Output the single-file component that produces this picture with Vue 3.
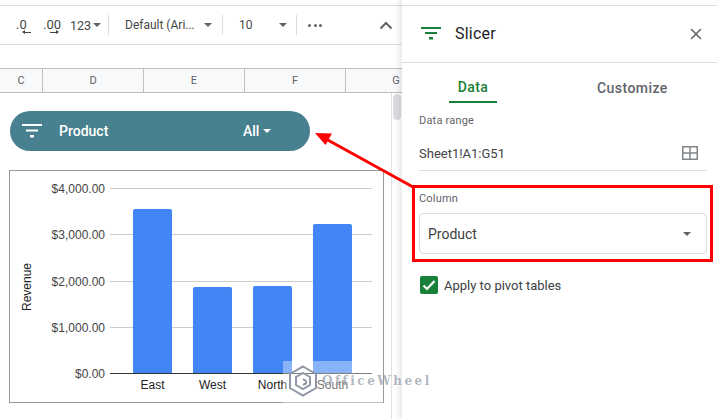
<script setup>
const columns = [
  { name: "C", width: 43 },
  { name: "D", width: 101 },
  { name: "E", width: 101 },
  { name: "F", width: 101 },
  { name: "G", width: 101 },
];

const gridLines = [
  { y: 17.5, label: "$4,000.00" },
  { y: 63.5, label: "$3,000.00" },
  { y: 110.5, label: "$2,000.00" },
  { y: 156.5, label: "$1,000.00" },
  { y: 202.5, label: "$0.00" },
];

const bars = [
  { name: "East", x: 123, top: 38 },
  { name: "West", x: 183, top: 116 },
  { name: "North", x: 243, top: 115 },
  { name: "South", x: 303, top: 53 },
];
</script>

<template>
  <div class="page">
    <main class="sheet">
      <div class="toolbar">
        <span class="tool dec one">.0<i class="arrow left"></i></span>
        <span class="tool dec two">.00<i class="arrow right"></i></span>
        <span class="tool num">123<i class="caret"></i></span>
        <span class="divider first"></span>
        <span class="tool font">Default (Ari...<i class="caret"></i></span>
        <span class="divider"></span>
        <span class="tool size">10<i class="caret"></i></span>
        <span class="divider"></span>
        <span class="dots"><b></b><b></b><b></b></span>
        <svg class="chevron" width="14" height="9" viewBox="0 0 14 9">
          <path d="M1.5 7.5 7 2l5.5 5.5" fill="none" stroke="#5f6368" stroke-width="2" />
        </svg>
      </div>
      <div class="formula"></div>
      <div class="col-headers">
        <div
          v-for="col in columns"
          :key="col.name"
          class="col"
          :style="{ width: col.width + 'px' }"
        >
          {{ col.name }}
        </div>
      </div>
      <div class="grid">
        <div class="canvas">
          <div class="slicer-pill">
            <svg width="20" height="14" viewBox="0 0 20 14">
              <path d="M0 0h20v2H0zM4 5.5h12v2H4zM8 11h4v2.500H8z" fill="#fff" />
            </svg>
            <span class="pill-name">Product</span>
            <span class="pill-value">All<i class="caret white"></i></span>
          </div>
          <div class="chart">
            <svg width="373" height="231" viewBox="0 0 373 231">
              <text class="axis-title" transform="translate(21 116) rotate(-90)" text-anchor="middle">Revenue</text>
              <g v-for="line in gridLines" :key="line.y">
                <line
                  x1="100"
                  x2="362"
                  :y1="line.y"
                  :y2="line.y"
                  :stroke="line.y > 200 ? '#333' : '#ccc'"
                />
                <text class="tick" x="95" :y="line.y + 4" text-anchor="end">{{ line.label }}</text>
              </g>
              <g v-for="bar in bars" :key="bar.name">
                <path
                  :d="`M${bar.x} 202V${bar.top + 2}q0-2 2-2h35q2 0 2 2V202z`"
                  fill="#4285f4"
                />
                <text class="tick dark" :x="bar.x + 19.500" y="218" text-anchor="middle">{{ bar.name }}</text>
              </g>
            </svg>
          </div>
        </div>
        <div class="scroll-gutter"><div class="scroll-thumb"></div></div>
      </div>
    </main>

    <aside class="panel">
      <header class="panel-head">
        <svg width="20" height="13" viewBox="0 0 20 13">
          <path d="M0 0h20v2H0zM4 5h12v2H4zM8 10h4v2.500H8z" fill="#188038" />
        </svg>
        <h1>Slicer</h1>
        <svg class="close" width="12" height="12" viewBox="0 0 12 12">
          <path d="M1 1l10 10M11 1 1 11" stroke="#5f6368" stroke-width="1.500" fill="none" />
        </svg>
      </header>
      <nav class="tabs">
        <span class="tab active">Data</span>
        <span class="tab">Customize</span>
      </nav>
      <div class="panel-body">
        <label class="field-label">Data range</label>
        <div class="range-row">
          <span>Sheet1!A1:G51</span>
          <svg width="16" height="14" viewBox="0 0 16 14">
            <path d="M.75.75h14.500v12.500H.75zM8 .75v12.500M.75 7h14.500" fill="none" stroke="#80868b" stroke-width="1.500" />
          </svg>
        </div>
        <div class="highlight">
          <label class="field-label">Column</label>
          <div class="select">
            <span>Product</span>
            <i class="caret"></i>
          </div>
        </div>
        <div class="check-row">
          <span class="checkbox">
            <svg width="14" height="12" viewBox="0 0 14 12">
              <path d="M1.500 6.500 5 10l7.500-8" fill="none" stroke="#fff" stroke-width="2.200" />
            </svg>
          </span>
          <span>Apply to pivot tables</span>
        </div>
      </div>
    </aside>

    <svg class="callout" width="717" height="419" viewBox="0 0 717 419">
      <path d="M413 187 326 139" stroke="#f00" stroke-width="3" fill="none" />
      <path d="M315 133 332 133.500 325.500 145z" fill="#f00" />
    </svg>

    <div class="watermark">
      <svg width="30" height="32" viewBox="0 0 30 32">
        <path
          d="M15 1.500 28 9V23L15 30.500 2 23V9zM15 8 22 12V20L15 24 8 20V12zM15 14 18 16V18.500L15 20"
          fill="none"
          stroke="#8f97a6"
          stroke-width="2"
        />
      </svg>
      <span>OfficeWheel</span>
    </div>
  </div>
</template>

<style scoped>
.page {
  position: relative;
  display: flex;
  width: 717px;
  height: 419px;
  overflow: hidden;
  background: #fff;
  font-family: Roboto, "Liberation Sans", sans-serif;
  color: #3c4043;
}

.sheet {
  width: 402px;
  flex: none;
  padding-top: 5px;
  box-sizing: border-box;
}

.toolbar {
  display: flex;
  align-items: center;
  height: 40px;
  box-sizing: border-box;
  border-top: 1px solid #dadce0;
  border-bottom: 1px solid #dadce0;
  font-size: 12px;
}

.tool {
  position: relative;
  display: flex;
  align-items: center;
  color: #444746;
}

.dec {
  font-size: 13px;
  margin-top: -2px;
}

.one {
  margin-left: 16px;
  width: 27px;
}

.two {
  width: 27px;
}

.arrow {
  position: absolute;
  top: 15px;
  width: 7px;
  height: 1.500px;
  background: #444;
}

.arrow::after {
  content: "";
  position: absolute;
  top: -2px;
  border-top: 2.500px solid transparent;
  border-bottom: 2.500px solid transparent;
}

.arrow.left {
  left: 8px;
}

.arrow.left::after {
  left: -2px;
  border-right: 3px solid #444;
}

.arrow.right {
  left: 7px;
}

.arrow.right::after {
  right: -2px;
  border-left: 3px solid #444;
}

.num {
  width: 38px;
  font-size: 12.500px;
}

.num .caret {
  margin-left: 2px;
}

.caret {
  display: inline-block;
  width: 0;
  height: 0;
  border-left: 4px solid transparent;
  border-right: 4px solid transparent;
  border-top: 4px solid #5f6368;
}

.caret.white {
  border-top-color: #fff;
  margin-left: 4px;
}

.divider {
  width: 1px;
  height: 20px;
  background: #dadce0;
}

.divider.first {
  margin-right: 16px;
}

.font {
  width: 97px;
  font-size: 12px;
  justify-content: space-between;
  padding-right: 10px;
  box-sizing: border-box;
}

.size {
  width: 73px;
  padding: 0 9px 0 16px;
  box-sizing: border-box;
  justify-content: space-between;
}

.dots {
  display: flex;
  gap: 2.500px;
  margin-left: 11px;
}

.dots b {
  width: 3px;
  height: 3px;
  border-radius: 50%;
  background: #5f6368;
}

.chevron {
  margin-left: 57px;
}

.formula {
  height: 23px;
}

.col-headers {
  display: flex;
  height: 25px;
  box-sizing: border-box;
  overflow: hidden;
  background: #f8f9fa;
  border-top: 1px solid #c0c0c0;
  border-bottom: 1px solid #c0c0c0;
}

.col {
  flex: none;
  box-sizing: border-box;
  border-right: 1px solid #c0c0c0;
  text-align: center;
  font-size: 11px;
  line-height: 23px;
  color: #5f6368;
}

.grid {
  display: flex;
  height: 326px;
}

.canvas {
  width: 391px;
  flex: none;
  padding: 18px 0 0 10px;
  box-sizing: border-box;
}

.slicer-pill {
  display: flex;
  align-items: center;
  width: 300px;
  height: 40px;
  padding-left: 12px;
  box-sizing: border-box;
  border-radius: 20px;
  background: #47808e;
  color: #fff;
  font-size: 14px;
  font-weight: 500;
}

.pill-name {
  margin-left: 17px;
  width: 184px;
}

.pill-value {
  display: flex;
  align-items: center;
}

.chart {
  width: 375px;
  height: 233px;
  margin: 19px 0 0 -1px;
  box-sizing: border-box;
  border: 1px solid #999;
}

.chart svg {
  display: block;
}

.tick {
  font-family: "Liberation Sans", Arial, sans-serif;
  font-size: 12px;
  fill: #444;
}

.tick.dark {
  fill: #222;
}

.axis-title {
  font-family: "Liberation Sans", Arial, sans-serif;
  font-size: 12px;
  fill: #222;
}

.scroll-gutter {
  width: 11px;
  border-left: 1px solid #e0e0e0;
  box-sizing: border-box;
  padding: 1px;
}

.scroll-thumb {
  width: 8px;
  height: 26px;
  border-radius: 4px;
  background: #dadce0;
}

.panel {
  flex: 1;
  padding-top: 5px;
  box-sizing: border-box;
  background: #fff;
  box-shadow: -3px 0 5px rgba(60, 64, 67, 0.12);
  z-index: 1;
}

.panel-head {
  display: flex;
  align-items: center;
  height: 58px;
  padding: 0 15px 1px 19px;
  box-sizing: border-box;
  border-top: 1px solid #dadce0;
  border-bottom: 1px solid #dadce0;
}

.panel-head h1 {
  margin: 0 0 0 14px;
  flex: 1;
  font-size: 16px;
  font-weight: 400;
  letter-spacing: 0.2px;
  color: #202124;
}

.tabs {
  display: flex;
  height: 40px;
}

.tab {
  display: flex;
  align-items: center;
  justify-content: center;
  height: 40px;
  box-sizing: border-box;
  padding-top: 9px;
  font-size: 14px;
  font-weight: 500;
  letter-spacing: 0.45px;
  color: #5f6368;
}

.tab.active {
  width: 48px;
  margin-left: 47px;
  margin-right: 100px;
  color: #188038;
  border-bottom: 2px solid #188038;
}

.panel-body {
  padding: 11px 10px 0 17px;
}

.field-label {
  display: block;
  font-size: 11px;
  line-height: 13px;
  letter-spacing: 0.2px;
  color: #5f6368;
}

.range-row {
  display: flex;
  align-items: center;
  justify-content: space-between;
  height: 40px;
  margin-top: 4px;
  padding: 5px 9px 0 0;
  box-sizing: border-box;
  border-bottom: 1px solid #dadce0;
  font-size: 13px;
  color: #444;
}

.highlight {
  margin: 14px -6px 0 -7px;
  height: 77px;
  padding: 4px 0 0 4px;
  box-sizing: border-box;
  border: 3px solid #f00;
}

.select {
  display: flex;
  align-items: center;
  justify-content: space-between;
  width: 288px;
  height: 41px;
  margin-top: 8px;
  padding: 0 15px 0 8px;
  box-sizing: border-box;
  border: 1px solid #dadce0;
  border-radius: 4px;
  font-size: 14px;
  color: #3c4043;
}

.check-row {
  display: flex;
  align-items: center;
  gap: 6px;
  margin: 14px 0 0 1px;
  font-size: 13px;
  color: #3c4043;
}

.checkbox {
  display: flex;
  align-items: center;
  justify-content: center;
  width: 18px;
  height: 18px;
  border-radius: 2px;
  background: #188038;
}

.callout {
  position: absolute;
  left: 0;
  top: 0;
  z-index: 2;
  pointer-events: none;
}

.watermark {
  position: absolute;
  left: 283px;
  top: 361px;
  width: 100px;
  height: 42px;
  z-index: 3;
  display: flex;
  align-items: center;
  overflow: visible;
  background: rgba(255, 255, 255, 0.38);
  white-space: nowrap;
}

.watermark svg {
  margin: -2px 0 0 5px;
  flex: none;
}

.watermark span {
  margin: -2px 0 0 4px;
  font-family: "DejaVu Serif", serif;
  font-size: 12px;
  font-weight: 700;
  letter-spacing: 2.500px;
  color: rgba(143, 151, 166, 0.7);
}
</style>
